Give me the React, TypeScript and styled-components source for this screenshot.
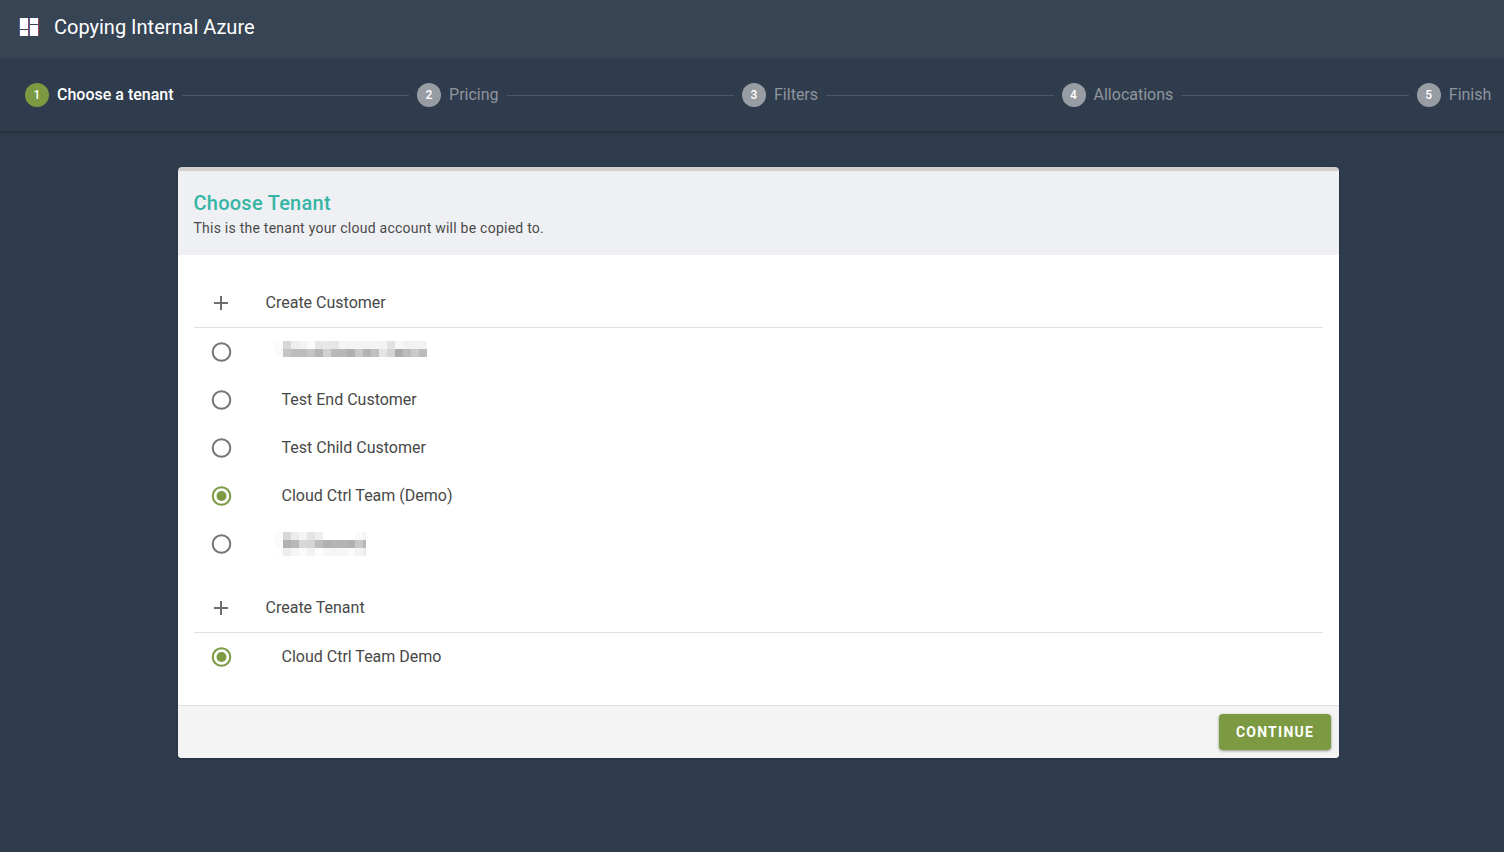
import React from "react";
import styled, { createGlobalStyle } from "styled-components";

const Global = createGlobalStyle`
  html, body { margin: 0; padding: 0; height: 100%; background: #2f3c4d; }
  body { font-family: Roboto, "Liberation Sans", sans-serif; }
  * { box-sizing: border-box; }
`;

const Page = styled.div`
  width: 1504px;
  height: 852px;
  overflow: hidden;
  background: #2f3c4d;
  display: flex;
  flex-direction: column;
`;

const TopBar = styled.header`
  height: 59px;
  flex: none;
  background: #364453;
  display: flex;
  align-items: center;
  padding-left: 19px;
  padding-bottom: 4px;
  gap: 15px;
`;

const AppTitle = styled.h1`
  margin: -2px 0 0;
  font-size: 20px;
  font-weight: 400;
  line-height: 24px;
  color: #fff;
`;

const Stepper = styled.nav`
  height: 73px;
  flex: none;
  display: flex;
  align-items: center;
  padding: 0 12.7px 0 25px;
  background: #2f3c4d;
  border-bottom: 1px solid #27323f;
  box-shadow: 0 1px 3px rgba(0, 0, 0, 0.2);
`;

const Step = styled.div`
  display: flex;
  align-items: center;
  gap: 8px;
  flex: none;
`;

const StepDot = styled.span<{ $active?: boolean }>`
  width: 24px;
  height: 24px;
  border-radius: 50%;
  display: flex;
  align-items: center;
  justify-content: center;
  background: ${(p) => (p.$active ? "#7b9a41" : "#989da4")};
  color: #fff;
  font-size: 12px;
  font-weight: 500;
`;

const StepLabel = styled.span<{ $active?: boolean }>`
  font-size: 16px;
  line-height: 24px;
  font-weight: ${(p) => (p.$active ? 500 : 400)};
  color: ${(p) => (p.$active ? "#fff" : "#8f959d")};
`;

const StepLine = styled.span`
  flex: 1;
  height: 1px;
  margin: 1px 8px 0;
  background: #4c5866;
`;

const Main = styled.main`
  flex: 1;
  padding: 35px 165px 0 178px;
`;

const Card = styled.section`
  width: 1161px;
  height: 591px;
  background: #fff;
  border-top: 4px solid #d3cfcf;
  border-radius: 4px;
  overflow: hidden;
  display: flex;
  flex-direction: column;
  box-shadow: 0 1px 3px rgba(0, 0, 0, 0.2);
`;

const CardHeader = styled.div`
  height: 84px;
  flex: none;
  background: #eff0f4;
  padding: 20px 15.5px 0;
`;

const CardTitle = styled.h2`
  margin: 0;
  font-size: 20px;
  line-height: 25px;
  font-weight: 500;
  letter-spacing: 0.25px;
  color: #36b5a5;
`;

const CardSubtitle = styled.p`
  margin: 2px 0 0;
  font-size: 14px;
  line-height: 20px;
  letter-spacing: 0.24px;
  color: #4a4a4a;
`;

const CardBody = styled.div`
  flex: 1;
  padding: 24px 16px 0;
`;

const Group = styled.div`
  & + & {
    margin-top: 16px;
  }
`;

const CreateRow = styled.div`
  height: 49px;
  display: flex;
  align-items: center;
  border-bottom: 1px solid #e0e0e0;
  font-size: 16px;
  color: #484848;
`;

const PlusSlot = styled.span`
  width: 71.5px;
  padding-left: 20.4px;
  display: flex;
  color: #6e6e6e;
`;

const RowText = styled.span`
  padding-bottom: 2px;
`;

const TenantRow = styled.label`
  height: 48px;
  display: flex;
  align-items: center;
  font-size: 16px;
  color: #484848;
  padding-left: 17px;
`;

const RadioIcon = styled.svg<{ $checked?: boolean }>`
  flex: none;
  display: block;
  margin-right: 49.5px;
  color: ${(p) => (p.$checked ? "#7b9a41" : "#757575")};
`;

const Mosaic = styled.svg<{ $shift: number }>`
  display: block;
  flex: none;
  margin-left: -6.5px;
  margin-top: ${(p) => p.$shift}px;
`;

const CardFooter = styled.div`
  height: 53px;
  flex: none;
  background: #f4f4f4;
  border-top: 1px solid #e0e0e0;
  display: flex;
  justify-content: flex-end;
  align-items: center;
  padding-right: 8px;
`;

const ContinueButton = styled.button`
  width: 112px;
  height: 36px;
  border: 0;
  border-radius: 4px;
  background: #7b9a41;
  color: #fff;
  font-family: Roboto, "Liberation Sans", sans-serif;
  font-size: 14px;
  font-weight: 700;
  letter-spacing: 1.25px;
  text-transform: uppercase;
  box-shadow: 0 1px 3px rgba(0, 0, 0, 0.4);
`;

const gray = (v: number) => `rgb(${v},${v},${v})`;

const BLUR_A = [
  [0xfc, 0xd8, 0xee, 0xf2, 0xfa, 0xe6, 0xe8, 0xe6, 0xf4, 0xf4, 0xf4, 0xf4, 0xf4, 0xf3, 0xe2, 0xf6, 0xf2, 0xf2, 0xf2],
  [0xfa, 0xc4, 0xbc, 0xbc, 0xc4, 0xb4, 0xd0, 0xb8, 0xb8, 0xae, 0xc8, 0xb4, 0xc0, 0xe4, 0xd4, 0xac, 0xbc, 0xc8, 0xbc],
];

const BLUR_B = [
  [0xfc, 0xd8, 0xec, 0xf4, 0xe4, 0xee, 0xff, 0xff, 0xff, 0xff, 0xfa, 0xf4],
  [0xfa, 0xb0, 0xb8, 0xd8, 0xd4, 0xbc, 0xb0, 0xb4, 0xb4, 0xb0, 0xc8, 0xb8],
  [0xfe, 0xec, 0xf6, 0xfa, 0xf2, 0xfc, 0xf8, 0xf6, 0xf6, 0xfa, 0xf2, 0xec],
];

const Pixelated = ({ rows, width, shift }: { rows: number[][]; width: number; shift: number }) => (
  <Mosaic $shift={shift} width={width} height={rows.length * 8} viewBox={`0 0 ${width} ${rows.length * 8}`} aria-hidden>
    {rows.map((row, y) =>
      row.map((v, x) => <rect key={`${x}-${y}`} x={x * 8} y={y * 8} width={8} height={8} fill={gray(v)} />)
    )}
  </Mosaic>
);

const Radio = ({ checked }: { checked?: boolean }) => (
  <RadioIcon $checked={checked} width="21" height="20" viewBox="0 0 21 20" aria-hidden>
    <circle cx="10.5" cy="10" r="8.8" fill="none" stroke="currentColor" strokeWidth="2" />
    {checked && <circle cx="10.5" cy="10" r="5" fill="currentColor" />}
  </RadioIcon>
);

const Logo = () => (
  <svg width="20" height="19" viewBox="-1 0 20 19" aria-hidden>
    <rect x="-0.5" y="0" width="0.5" height="18" fill="#5a78e0" />
    <rect x="0" y="0" width="8" height="11" fill="#fff" />
    <rect x="0" y="12" width="8" height="6" fill="#fff" />
    <rect x="8" y="0" width="0.5" height="18" fill="#d84a5a" />
    <rect x="9.5" y="0" width="0.5" height="18" fill="#5a78e0" />
    <rect x="10" y="0" width="8" height="6" fill="#fff" />
    <rect x="10" y="7" width="8" height="11" fill="#fff" />
    <rect x="18" y="0" width="0.6" height="18" fill="#d84a5a" />
  </svg>
);

const PlusIcon = () => (
  <svg width="14" height="14" viewBox="0 0 14 14" aria-hidden>
    <path d="M6 0h2v6h6v2H8v6H6V8H0V6h6z" fill="currentColor" />
  </svg>
);

const steps = ["Choose a tenant", "Pricing", "Filters", "Allocations", "Finish"];

export default function App() {
  return (
    <Page>
      <Global />
      <TopBar>
        <Logo />
        <AppTitle>Copying Internal Azure</AppTitle>
      </TopBar>
      <Stepper>
        {steps.map((s, i) => (
          <React.Fragment key={s}>
            {i > 0 && <StepLine />}
            <Step>
              <StepDot $active={i === 0}>{i + 1}</StepDot>
              <StepLabel $active={i === 0}>{s}</StepLabel>
            </Step>
          </React.Fragment>
        ))}
      </Stepper>
      <Main>
        <Card>
          <CardHeader>
            <CardTitle>Choose Tenant</CardTitle>
            <CardSubtitle>This is the tenant your cloud account will be copied to.</CardSubtitle>
          </CardHeader>
          <CardBody>
            <Group>
              <CreateRow>
                <PlusSlot><PlusIcon /></PlusSlot>
                <RowText>Create Customer</RowText>
              </CreateRow>
              <TenantRow>
                <Radio />
                <Pixelated rows={BLUR_A} width={152} shift={-6} />
              </TenantRow>
              <TenantRow><Radio /><RowText>Test End Customer</RowText></TenantRow>
              <TenantRow><Radio /><RowText>Test Child Customer</RowText></TenantRow>
              <TenantRow><Radio checked /><RowText>Cloud Ctrl Team (Demo)</RowText></TenantRow>
              <TenantRow>
                <Radio />
                <Pixelated rows={BLUR_B} width={91} shift={0} />
              </TenantRow>
            </Group>
            <Group>
              <CreateRow>
                <PlusSlot><PlusIcon /></PlusSlot>
                <RowText>Create Tenant</RowText>
              </CreateRow>
              <TenantRow><Radio checked /><RowText>Cloud Ctrl Team Demo</RowText></TenantRow>
            </Group>
          </CardBody>
          <CardFooter>
            <ContinueButton>Continue</ContinueButton>
          </CardFooter>
        </Card>
      </Main>
    </Page>
  );
}
